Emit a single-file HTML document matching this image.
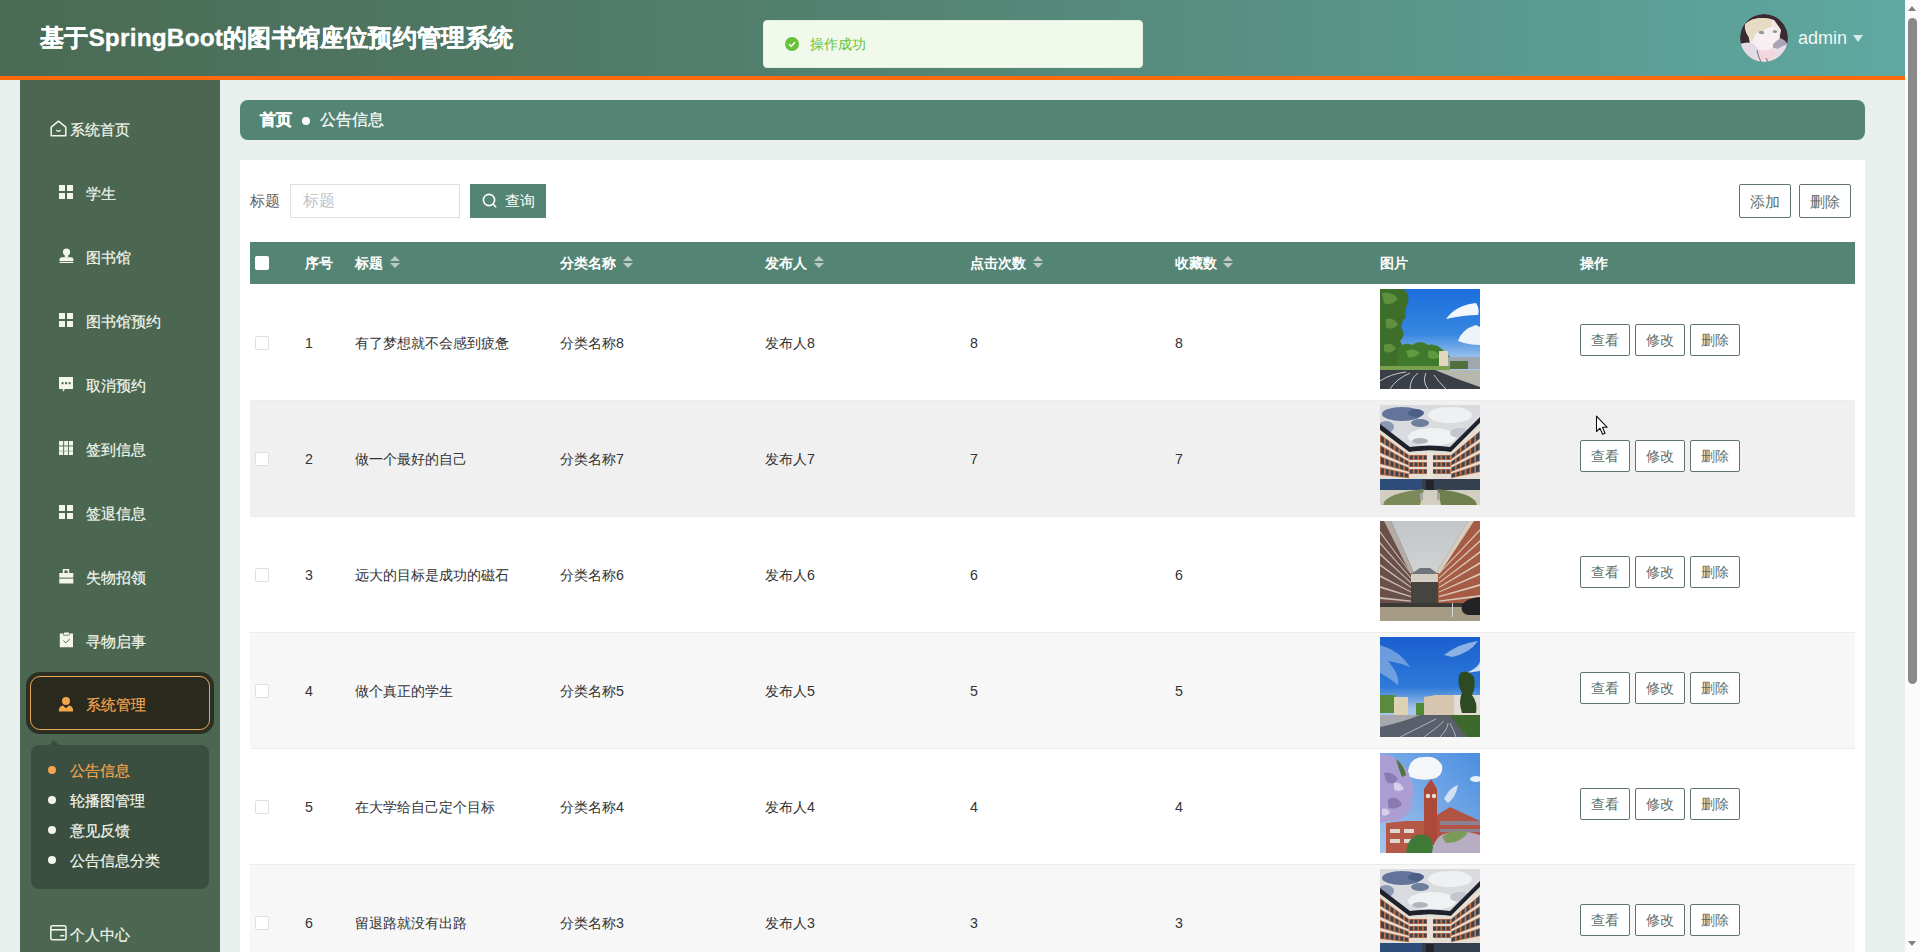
<!DOCTYPE html>
<html><head><meta charset="utf-8">
<style>
*{margin:0;padding:0;box-sizing:border-box}
html,body{width:1920px;height:952px;overflow:hidden}
body{background:#e9efec;font-family:"Liberation Sans",sans-serif;position:relative}
.abs{position:absolute}
#hdr{left:0;top:0;width:1905px;height:80px;background:linear-gradient(90deg,#4a6a53 0%,#548575 50%,#5fa8a1 100%);border-bottom:4px solid #fa6a0a}
#title{left:40px;top:20px;font-size:24.4px;letter-spacing:0.2px;-webkit-text-stroke:0.35px #fff;font-weight:bold;color:#fff;line-height:36px;white-space:nowrap}
#avatar{left:1740px;top:14px;width:48px;height:48px;border-radius:50%;overflow:hidden}
#uname{left:1798px;top:26px;font-size:18px;color:#eef8f6;line-height:24px}
#caret{left:1853px;top:35px;width:0;height:0;border-left:5px solid transparent;border-right:5px solid transparent;border-top:7px solid #d4ece8}
#toast{left:763px;top:20px;width:380px;height:48px;background:#f0f9eb;border:1px solid #e1f3d8;border-radius:4px}
#toast .ic{left:21px;top:16px;width:14px;height:14px;border-radius:50%;background:#67c23a}
#toast .tx{left:46px;top:14px;font-size:14px;color:#67c23a;line-height:18px}
#sb{left:1905px;top:0;width:15px;height:952px;background:#fbfbfb}
#thumb{left:1908px;top:18px;width:9px;height:666px;border-radius:5px;background:#898989}
#side{left:20px;top:80px;width:200px;height:872px;background:#4b6751}
.mi{position:absolute;color:#f2f6ec;font-size:15.3px;line-height:20px;white-space:nowrap;-webkit-text-stroke:0.2px currentColor}
.ico{position:absolute}
#bc{left:240px;top:100px;width:1625px;height:40px;background:#548574;border-radius:8px}
#card{left:240px;top:160px;width:1625px;height:792px;background:#fff}
.lbl{font-size:15.3px;color:#606266;line-height:20px}
.btn{position:absolute;border:1px solid #62746f;background:#fff;color:#5e6e69;font-size:14.3px;line-height:30px;text-align:center;border-radius:2px}
#thead{left:250px;top:242px;width:1605px;height:42px;background:#548574}
.th{position:absolute;top:254px;color:#fff;font-weight:bold;font-size:14.2px;line-height:18px;white-space:nowrap}
.sort{position:absolute;top:256px;width:10px;height:12px}
.row{position:absolute;left:250px;width:1605px;height:116px;box-shadow:inset 0 1px 0 #ececec}
.td{position:absolute;font-size:14.2px;color:#333;line-height:18px;white-space:nowrap}
.cb{position:absolute;left:5px;width:14px;height:14px;border:1px solid #dcdfe6;border-radius:2px;background:#fff}
.img{position:absolute;left:1130px;width:100px;height:100px;overflow:hidden}
.img svg{display:block;filter:blur(0.6px)}
</style></head><body>
<div id="hdr" class="abs"></div>
<div id="title" class="abs">基于SpringBoot的图书馆座位预约管理系统</div>
<div id="avatar" class="abs"><svg width="48" height="48" viewBox="0 0 48 48" style="display:block"><defs><clipPath id="av"><circle cx="24" cy="24" r="24"/></clipPath></defs><g clip-path="url(#av)" style="filter:blur(0.45px)">
<rect width="48" height="48" fill="#f4eaee"/>
<path d="M0 0 H48 V30 L40 26 Q40 12 34 6 Q24 2 12 6 Q6 12 10 30 L0 32 Z" fill="#3b2a32"/>
<path d="M5 10 Q12 3 24 4 Q32 5 36 10 Q40 14 41 18 Q36 12 32 12 Q26 14 22 18 Q16 20 14 28 Q10 26 8 22 Q4 16 5 10Z" fill="#e6dcc4"/>
<path d="M32 7 Q38 10 41 16 L40 22 Q36 14 32 12Z" fill="#f0e6e4"/>
<path d="M13 26 Q14 18 22 17 Q30 13 36 14 Q40 20 39 28 Q36 34 30 37 Q22 38 16 33 Q12 30 13 26Z" fill="#f8eff2"/>
<ellipse cx="21.5" cy="18.5" rx="2.8" ry="1.8" fill="#8c9c98"/><ellipse cx="35" cy="17.5" rx="2.2" ry="1.6" fill="#8c9c98"/>
<path d="M0 30 Q8 27 14 30 Q18 36 22 38 L20 48 H0 Z" fill="#e4dae4"/>
<path d="M20 36 Q28 38 34 33 L36 48 H20 Z" fill="#f2d8de"/>
<path d="M33 30 L40 24 Q46 26 47 30 L42 38 Q38 34 33 34Z" fill="#a9a5b5"/>
<path d="M35 36 Q42 32 48 30 V48 H34Z" fill="#e8dde8"/>
<path d="M17 36 Q18 42 21 48 M26 44 L28 48" stroke="#5a5260" stroke-width="0.8" fill="none"/>
</g></svg></div>
<div id="uname" class="abs">admin</div>
<div id="caret" class="abs"></div>
<div id="toast" class="abs"><div class="ic abs"><svg width="14" height="14" viewBox="0 0 14 14" style="display:block"><path d="M4 7.2 L6.2 9.2 L10 5.2" fill="none" stroke="#fff" stroke-width="1.4"/></svg></div><div class="tx abs">操作成功</div></div>
<div id="sb" class="abs"></div>
<div id="thumb" class="abs"></div>

<div id="side" class="abs"></div>
<!-- sidebar menu -->
<svg class="ico" style="left:50px;top:120px" width="17" height="17" viewBox="0 0 17 17"><path d="M1.2 7.2 L8.5 1.2 L15.8 7.2 V15.8 H1.2 Z" fill="none" stroke="#f2f6ec" stroke-width="1.5" stroke-linejoin="round"/><path d="M6.3 10.3 Q8.5 12.2 10.7 10.3" fill="none" stroke="#f2f6ec" stroke-width="1.3"/></svg>
<div class="mi" style="left:70px;top:120px">系统首页</div>

<svg class="ico" style="left:59px;top:185px" width="14" height="14"><rect x="0" y="0" width="6" height="6" fill="#f2f6ec"/><rect x="8" y="0" width="6" height="6" fill="#f2f6ec"/><rect x="0" y="8" width="6" height="6" fill="#f2f6ec"/><rect x="8" y="8" width="6" height="6" fill="#f2f6ec"/></svg>
<div class="mi" style="left:86px;top:184px">学生</div>

<svg class="ico" style="left:59px;top:248px" width="15" height="15" viewBox="0 0 15 15"><circle cx="7.5" cy="4" r="3.6" fill="#f2f6ec"/><rect x="5.8" y="5" width="3.4" height="4.5" fill="#f2f6ec"/><path d="M0.6 13 V11.3 Q0.6 9.3 3 9.3 H12 Q14.4 9.3 14.4 11.3 V13 Z" fill="#f2f6ec"/><rect x="0.6" y="13.8" width="13.8" height="1.2" fill="#f2f6ec"/></svg>
<div class="mi" style="left:86px;top:248px">图书馆</div>

<svg class="ico" style="left:59px;top:313px" width="14" height="14"><rect x="0" y="0" width="6" height="6" fill="#f2f6ec"/><rect x="8" y="0" width="6" height="6" fill="#f2f6ec"/><rect x="0" y="8" width="6" height="6" fill="#f2f6ec"/><rect x="8" y="8" width="6" height="6" fill="#f2f6ec"/></svg>
<div class="mi" style="left:86px;top:312px">图书馆预约</div>

<svg class="ico" style="left:59px;top:377px" width="15" height="15" viewBox="0 0 15 15"><path d="M0 0 H14 V12 H6 L3.8 15 V12 H0 Z" fill="#f2f6ec"/><rect x="2.6" y="5.2" width="2" height="2" fill="#4b6751"/><rect x="6.1" y="5.2" width="2" height="2" fill="#4b6751"/><rect x="9.6" y="5.2" width="2" height="2" fill="#4b6751"/></svg>
<div class="mi" style="left:86px;top:376px">取消预约</div>

<svg class="ico" style="left:59px;top:441px" width="14" height="14"><path d="M0 0H14V14H0Z" fill="#f2f6ec"/><rect x="4.2" y="0" width="0.9" height="14" fill="#4b6751"/><rect x="9" y="0" width="0.9" height="14" fill="#4b6751"/><rect x="0" y="4.5" width="14" height="0.9" fill="#4b6751"/><rect x="0" y="9.8" width="14" height="0.5" fill="#6d8672"/></svg>
<div class="mi" style="left:86px;top:440px">签到信息</div>

<svg class="ico" style="left:59px;top:505px" width="14" height="14"><rect x="0" y="0" width="6" height="6" fill="#f2f6ec"/><rect x="8" y="0" width="6" height="6" fill="#f2f6ec"/><rect x="0" y="8" width="6" height="6" fill="#f2f6ec"/><rect x="8" y="8" width="6" height="6" fill="#f2f6ec"/></svg>
<div class="mi" style="left:86px;top:504px">签退信息</div>

<svg class="ico" style="left:59px;top:569px" width="15" height="15" viewBox="0 0 15 15"><path d="M3.8 0 H10.2 V4 H8.6 V1.6 H5.4 V4 H3.8 Z" fill="#f2f6ec"/><rect x="0.3" y="4" width="14" height="4.6" fill="#f2f6ec"/><rect x="0.3" y="9.6" width="14" height="4.9" fill="#f2f6ec"/></svg>
<div class="mi" style="left:86px;top:568px">失物招领</div>

<svg class="ico" style="left:59px;top:632px" width="15" height="16" viewBox="0 0 15 16"><path d="M0.8 1.6 H4.3 V3.4 H10.5 V1.6 H14 V15.2 H0.8 Z" fill="#f2f6ec"/><rect x="4.8" y="0.4" width="5.2" height="2.4" rx="0.6" fill="#f2f6ec"/><path d="M4.4 8.6 L6.8 10.8 L10.8 7" fill="none" stroke="#4b6751" stroke-width="1"/></svg>
<div class="mi" style="left:86px;top:632px">寻物启事</div>

<div class="abs" style="left:30px;top:676px;width:180px;height:54px;background:#29291d;border:1.5px solid #e8a657;border-radius:10px;box-shadow:0 0 0 4px #2c3023"></div>
<svg class="ico" style="left:58px;top:696px" width="16" height="16" viewBox="0 0 16 16"><circle cx="8" cy="5" r="4" fill="#f3a54f"/><path d="M0.8 15.6 Q0.8 10.2 5 9.6 L8 12.2 L11 9.6 Q15.2 10.2 15.2 15.6 Z" fill="#f3a54f"/></svg>
<div class="mi" style="left:86px;top:695px;color:#f3a54f">系统管理</div>

<div class="abs" style="left:31px;top:745px;width:178px;height:144px;background:#3a4f40;border-radius:8px"></div>
<div class="abs" style="left:49px;top:740px;width:0;height:0;border-left:5px solid transparent;border-right:5px solid transparent;border-bottom:5px solid #3a4f40"></div>
<div class="abs" style="left:48px;top:766px;width:8px;height:8px;border-radius:50%;background:#f3a54f"></div>
<div class="mi" style="left:70px;top:761px;color:#f3a54f">公告信息</div>
<div class="abs" style="left:48px;top:796px;width:8px;height:8px;border-radius:50%;background:#f2f6ec"></div>
<div class="mi" style="left:70px;top:791px">轮播图管理</div>
<div class="abs" style="left:48px;top:826px;width:8px;height:8px;border-radius:50%;background:#f2f6ec"></div>
<div class="mi" style="left:70px;top:821px">意见反馈</div>
<div class="abs" style="left:48px;top:856px;width:8px;height:8px;border-radius:50%;background:#f2f6ec"></div>
<div class="mi" style="left:70px;top:851px">公告信息分类</div>

<svg class="ico" style="left:50px;top:925px" width="17" height="16" viewBox="0 0 17 16"><rect x="0.8" y="0.8" width="15.2" height="14" rx="1.6" fill="none" stroke="#f2f6ec" stroke-width="1.5"/><rect x="0.8" y="4" width="15.2" height="1.6" fill="#f2f6ec"/><rect x="10.2" y="10" width="4.2" height="1.5" fill="#f2f6ec"/></svg>
<div class="mi" style="left:70px;top:925px">个人中心</div>

<div id="bc" class="abs"></div>
<div id="card" class="abs"></div>
<div id="thead" class="abs"></div>

<div class="abs" style="left:255px;top:256px;width:14px;height:14px;background:#fff;border-radius:2px"></div>
<div class="th" style="left:305px">序号</div>
<div class="th" style="left:355px">标题</div><svg class="sort" style="left:390px" width="10" height="12" viewBox="0 0 10 12"><path d="M5 0 L10 5 H0 Z" fill="#c0c8c4"/><path d="M0 7 H10 L5 12 Z" fill="#c0c8c4"/></svg>
<div class="th" style="left:560px">分类名称</div><svg class="sort" style="left:623px" width="10" height="12" viewBox="0 0 10 12"><path d="M5 0 L10 5 H0 Z" fill="#c0c8c4"/><path d="M0 7 H10 L5 12 Z" fill="#c0c8c4"/></svg>
<div class="th" style="left:765px">发布人</div><svg class="sort" style="left:814px" width="10" height="12" viewBox="0 0 10 12"><path d="M5 0 L10 5 H0 Z" fill="#c0c8c4"/><path d="M0 7 H10 L5 12 Z" fill="#c0c8c4"/></svg>
<div class="th" style="left:970px">点击次数</div><svg class="sort" style="left:1033px" width="10" height="12" viewBox="0 0 10 12"><path d="M5 0 L10 5 H0 Z" fill="#c0c8c4"/><path d="M0 7 H10 L5 12 Z" fill="#c0c8c4"/></svg>
<div class="th" style="left:1175px">收藏数</div><svg class="sort" style="left:1223px" width="10" height="12" viewBox="0 0 10 12"><path d="M5 0 L10 5 H0 Z" fill="#c0c8c4"/><path d="M0 7 H10 L5 12 Z" fill="#c0c8c4"/></svg>
<div class="th" style="left:1380px">图片</div>
<div class="th" style="left:1580px">操作</div>
<div class="row" style="top:284px;background:#fff;box-shadow:none"><div class="cb" style="top:52px"></div><div class="td" style="left:55px;top:50px">1</div><div class="td" style="left:105px;top:50px">有了梦想就不会感到疲惫</div><div class="td" style="left:310px;top:50px">分类名称8</div><div class="td" style="left:515px;top:50px">发布人8</div><div class="td" style="left:720px;top:50px">8</div><div class="td" style="left:925px;top:50px">8</div><div class="img" style="top:5px"><svg width="100" height="100" viewBox="0 0 100 100"><defs><linearGradient id="s1" x1="0" y1="0" x2="0" y2="1"><stop offset="0" stop-color="#1b6ddc"/><stop offset="0.45" stop-color="#3787e0"/><stop offset="0.72" stop-color="#a9c9ee"/></linearGradient></defs>
<g>
<rect width="100" height="100" fill="url(#s1)"/>
<path d="M66 30 Q76 16 96 14 Q100 20 98 26 Q84 26 66 30Z" fill="#f3f6fb"/>
<path d="M78 52 Q82 40 96 36 L100 38 V56 Q88 56 78 52Z" fill="#eef3fa"/>
<path d="M0 0 H24 Q30 6 28 14 Q24 22 26 28 Q20 34 22 40 Q26 46 20 52 Q24 58 22 64 L20 80 H0 Z" fill="#3d6e2a"/>
<path d="M2 4 Q12 2 18 10 Q10 18 4 14Z M6 30 Q14 28 18 36 Q12 42 6 38Z M4 56 Q12 52 16 60 Q10 66 4 62Z" fill="#5f9040"/>
<path d="M18 60 Q24 52 32 56 Q40 50 48 56 Q56 54 64 62 L72 70 V80 H16 Z" fill="#3f7a2c"/>
<path d="M26 62 Q34 58 40 64 Q34 70 28 68Z M48 62 Q56 60 60 68 Q52 72 48 68Z" fill="#5e9a40"/>
<rect x="59" y="62" width="9" height="18" fill="#e2d8bc"/>
<rect x="68" y="68" width="32" height="12" fill="#9ea8ae"/>
<rect x="70" y="72" width="18" height="8" fill="#50703e"/>
<rect x="0" y="77" width="70" height="4" fill="#7aa24e"/>
<path d="M0 81 H100 V100 H0 Z" fill="#3a3e47"/>
<path d="M55 81 H100 V98 Q76 90 55 81 Z" fill="#b8b7ae"/>
<path d="M0 92 Q10 85 26 83 M10 100 Q16 90 30 84 M30 100 Q30 90 38 84 M48 100 Q42 92 46 84 M66 100 Q58 92 54 86" fill="none" stroke="#d6d8da" stroke-width="0.9"/>
</g></svg></div><div class="btn" style="left:1330px;top:40px;width:50px;height:32px">查看</div><div class="btn" style="left:1385px;top:40px;width:50px;height:32px">修改</div><div class="btn" style="left:1440px;top:40px;width:50px;height:32px">删除</div></div>
<div class="row" style="top:400px;background:#f0f0f0"><div class="cb" style="top:52px"></div><div class="td" style="left:55px;top:50px">2</div><div class="td" style="left:105px;top:50px">做一个最好的自己</div><div class="td" style="left:310px;top:50px">分类名称7</div><div class="td" style="left:515px;top:50px">发布人7</div><div class="td" style="left:720px;top:50px">7</div><div class="td" style="left:925px;top:50px">7</div><div class="img" style="top:5px"><svg width="100" height="100" viewBox="0 0 100 100"><g><rect width="100" height="100" fill="#d9dbde"/><ellipse cx="22" cy="9" rx="20" ry="7" fill="#62749a"/><ellipse cx="40" cy="18" rx="9" ry="4" fill="#6d7e9e"/><ellipse cx="6" cy="22" rx="8" ry="6" fill="#8a98b4"/><ellipse cx="36" cy="8" rx="8" ry="4" fill="#4d5f86"/><ellipse cx="70" cy="10" rx="22" ry="8" fill="#eef0f2"/><ellipse cx="52" cy="32" rx="24" ry="9" fill="#f0f1f3"/><ellipse cx="80" cy="28" rx="10" ry="5" fill="#c4c8ce"/><ellipse cx="40" cy="36" rx="8" ry="3" fill="#b0b6c0"/><path d="M0 19 L30 42 Q50 39 70 42 L100 12 V18 L71 47 Q50 44 29 47 L0 25 Z" fill="#1d222c"/><path d="M0 25 L29 47 Q50 44 71 47 L100 18 V75 H0 Z" fill="#e4ded4"/><path d="M0 29.0 L29 50.0 V54.6 L0 37.0 Z" fill="#c17249"/><path d="M0.9 30.4 L4.0 32.7 V38.6 L0.9 36.7 Z" fill="#3a4350"/><path d="M5.7 33.9 L8.8 36.2 V41.5 L5.7 39.7 Z" fill="#3a4350"/><path d="M10.5 37.4 L13.6 39.7 V44.5 L10.5 42.6 Z" fill="#3a4350"/><path d="M15.4 40.9 L18.5 43.2 V47.4 L15.4 45.5 Z" fill="#3a4350"/><path d="M20.2 44.4 L23.3 46.7 V50.3 L20.2 48.5 Z" fill="#3a4350"/><path d="M25.0 47.9 L28.1 50.2 V53.3 L25.0 51.4 Z" fill="#3a4350"/><path d="M0 40.0 L29 56.2 V60.8 L0 48.0 Z" fill="#c17249"/><path d="M0.9 41.3 L4.0 43.0 V48.9 L0.9 47.6 Z" fill="#3a4350"/><path d="M5.7 44.0 L8.8 45.7 V51.1 L5.7 49.7 Z" fill="#3a4350"/><path d="M10.5 46.7 L13.6 48.4 V53.2 L10.5 51.9 Z" fill="#3a4350"/><path d="M15.4 49.4 L18.5 51.1 V55.3 L15.4 54.0 Z" fill="#3a4350"/><path d="M20.2 52.1 L23.3 53.8 V57.5 L20.2 56.1 Z" fill="#3a4350"/><path d="M25.0 54.8 L28.1 56.5 V59.6 L25.0 58.3 Z" fill="#3a4350"/><path d="M0 51.0 L29 62.4 V67.0 L0 59.0 Z" fill="#c17249"/><path d="M0.9 52.1 L4.0 53.4 V59.3 L0.9 58.4 Z" fill="#3a4350"/><path d="M5.7 54.0 L8.8 55.3 V60.6 L5.7 59.8 Z" fill="#3a4350"/><path d="M10.5 55.9 L13.6 57.2 V62.0 L10.5 61.1 Z" fill="#3a4350"/><path d="M15.4 57.8 L18.5 59.1 V63.3 L15.4 62.4 Z" fill="#3a4350"/><path d="M20.2 59.7 L23.3 61.0 V64.6 L20.2 63.8 Z" fill="#3a4350"/><path d="M25.0 61.6 L28.1 62.9 V66.0 L25.0 65.1 Z" fill="#3a4350"/><path d="M0 62.0 L29 68.6 V73.2 L0 70.0 Z" fill="#c17249"/><path d="M0.9 63.0 L4.0 63.7 V69.6 L0.9 69.3 Z" fill="#3a4350"/><path d="M5.7 64.1 L8.8 64.8 V70.2 L5.7 69.8 Z" fill="#3a4350"/><path d="M10.5 65.2 L13.6 65.9 V70.7 L10.5 70.4 Z" fill="#3a4350"/><path d="M15.4 66.3 L18.5 67.0 V71.2 L15.4 70.9 Z" fill="#3a4350"/><path d="M20.2 67.4 L23.3 68.1 V71.8 L20.2 71.4 Z" fill="#3a4350"/><path d="M25.0 68.5 L28.1 69.2 V72.3 L25.0 72.0 Z" fill="#3a4350"/><path d="M100 26.0 L71 50.0 V54.6 L100 34.0 Z" fill="#c17249"/><path d="M99.1 27.5 L96.0 30.1 V36.0 L99.1 33.8 Z" fill="#3a4350"/><path d="M94.3 31.5 L91.2 34.1 V39.4 L94.3 37.3 Z" fill="#3a4350"/><path d="M89.5 35.5 L86.4 38.1 V42.9 L89.5 40.7 Z" fill="#3a4350"/><path d="M84.6 39.5 L81.5 42.1 V46.3 L84.6 44.1 Z" fill="#3a4350"/><path d="M79.8 43.5 L76.7 46.1 V49.7 L79.8 47.6 Z" fill="#3a4350"/><path d="M75.0 47.5 L71.9 50.1 V53.2 L75.0 51.0 Z" fill="#3a4350"/><path d="M100 37.0 L71 56.2 V60.8 L100 45.0 Z" fill="#c17249"/><path d="M99.1 38.4 L96.0 40.4 V46.4 L99.1 44.7 Z" fill="#3a4350"/><path d="M94.3 41.6 L91.2 43.6 V49.0 L94.3 47.3 Z" fill="#3a4350"/><path d="M89.5 44.8 L86.4 46.8 V51.6 L89.5 49.9 Z" fill="#3a4350"/><path d="M84.6 48.0 L81.5 50.0 V54.3 L84.6 52.6 Z" fill="#3a4350"/><path d="M79.8 51.2 L76.7 53.2 V56.9 L79.8 55.2 Z" fill="#3a4350"/><path d="M75.0 54.4 L71.9 56.4 V59.5 L75.0 57.8 Z" fill="#3a4350"/><path d="M100 48.0 L71 62.4 V67.0 L100 56.0 Z" fill="#c17249"/><path d="M99.1 49.2 L96.0 50.8 V56.7 L99.1 55.5 Z" fill="#3a4350"/><path d="M94.3 51.6 L91.2 53.2 V58.5 L94.3 57.4 Z" fill="#3a4350"/><path d="M89.5 54.0 L86.4 55.6 V60.4 L89.5 59.2 Z" fill="#3a4350"/><path d="M84.6 56.4 L81.5 58.0 V62.2 L84.6 61.0 Z" fill="#3a4350"/><path d="M79.8 58.8 L76.7 60.4 V64.0 L79.8 62.9 Z" fill="#3a4350"/><path d="M75.0 61.2 L71.9 62.8 V65.9 L75.0 64.7 Z" fill="#3a4350"/><path d="M100 59.0 L71 68.6 V73.2 L100 67.0 Z" fill="#c17249"/><path d="M99.1 60.1 L96.0 61.1 V67.0 L99.1 66.4 Z" fill="#3a4350"/><path d="M94.3 61.7 L91.2 62.7 V68.1 L94.3 67.4 Z" fill="#3a4350"/><path d="M89.5 63.3 L86.4 64.3 V69.1 L89.5 68.5 Z" fill="#3a4350"/><path d="M84.6 64.9 L81.5 65.9 V70.1 L84.6 69.5 Z" fill="#3a4350"/><path d="M79.8 66.5 L76.7 67.5 V71.2 L79.8 70.5 Z" fill="#3a4350"/><path d="M75.0 68.1 L71.9 69.1 V72.2 L75.0 71.6 Z" fill="#3a4350"/><rect x="29" y="50" width="42" height="5" fill="#c17249"/><rect x="30.0" y="50.7" width="2.8" height="3.6" fill="#3a4350"/><rect x="34.6" y="50.7" width="2.8" height="3.6" fill="#3a4350"/><rect x="39.2" y="50.7" width="2.8" height="3.6" fill="#3a4350"/><rect x="43.8" y="50.7" width="2.8" height="3.6" fill="#3a4350"/><rect x="48.4" y="50.7" width="2.8" height="3.6" fill="#3a4350"/><rect x="53.0" y="50.7" width="2.8" height="3.6" fill="#3a4350"/><rect x="57.6" y="50.7" width="2.8" height="3.6" fill="#3a4350"/><rect x="62.2" y="50.7" width="2.8" height="3.6" fill="#3a4350"/><rect x="66.8" y="50.7" width="2.8" height="3.6" fill="#3a4350"/><rect x="29" y="57" width="42" height="5" fill="#c17249"/><rect x="30.0" y="57.7" width="2.8" height="3.6" fill="#3a4350"/><rect x="34.6" y="57.7" width="2.8" height="3.6" fill="#3a4350"/><rect x="39.2" y="57.7" width="2.8" height="3.6" fill="#3a4350"/><rect x="43.8" y="57.7" width="2.8" height="3.6" fill="#3a4350"/><rect x="48.4" y="57.7" width="2.8" height="3.6" fill="#3a4350"/><rect x="53.0" y="57.7" width="2.8" height="3.6" fill="#3a4350"/><rect x="57.6" y="57.7" width="2.8" height="3.6" fill="#3a4350"/><rect x="62.2" y="57.7" width="2.8" height="3.6" fill="#3a4350"/><rect x="66.8" y="57.7" width="2.8" height="3.6" fill="#3a4350"/><rect x="29" y="64" width="42" height="5" fill="#c17249"/><rect x="30.0" y="64.7" width="2.8" height="3.6" fill="#3a4350"/><rect x="34.6" y="64.7" width="2.8" height="3.6" fill="#3a4350"/><rect x="39.2" y="64.7" width="2.8" height="3.6" fill="#3a4350"/><rect x="43.8" y="64.7" width="2.8" height="3.6" fill="#3a4350"/><rect x="48.4" y="64.7" width="2.8" height="3.6" fill="#3a4350"/><rect x="53.0" y="64.7" width="2.8" height="3.6" fill="#3a4350"/><rect x="57.6" y="64.7" width="2.8" height="3.6" fill="#3a4350"/><rect x="62.2" y="64.7" width="2.8" height="3.6" fill="#3a4350"/><rect x="66.8" y="64.7" width="2.8" height="3.6" fill="#3a4350"/><rect x="47" y="46" width="6" height="28" fill="#e8e4dc"/><rect x="0" y="74" width="100" height="12" fill="#34404f"/><rect x="0" y="74" width="42" height="11" fill="#2d4c7a"/><rect x="46" y="75" width="8" height="11" fill="#22262c"/><rect x="0" y="85" width="100" height="15" fill="#d2cec2"/><path d="M3 100 Q5 88 44 84 L40 100 Z" fill="#7c8a5a"/><path d="M97 100 Q95 88 57 84 L61 100 Z" fill="#6f804c"/><rect x="40" y="88" width="3" height="7" fill="#a8a8a4"/><rect x="57" y="88" width="3" height="7" fill="#a8a8a4"/></g></svg></div><div class="btn" style="left:1330px;top:40px;width:50px;height:32px">查看</div><div class="btn" style="left:1385px;top:40px;width:50px;height:32px">修改</div><div class="btn" style="left:1440px;top:40px;width:50px;height:32px">删除</div></div>
<div class="row" style="top:516px;background:#fff"><div class="cb" style="top:52px"></div><div class="td" style="left:55px;top:50px">3</div><div class="td" style="left:105px;top:50px">远大的目标是成功的磁石</div><div class="td" style="left:310px;top:50px">分类名称6</div><div class="td" style="left:515px;top:50px">发布人6</div><div class="td" style="left:720px;top:50px">6</div><div class="td" style="left:925px;top:50px">6</div><div class="img" style="top:5px"><svg width="100" height="100" viewBox="0 0 100 100"><defs><linearGradient id="s3" x1="0" y1="0" x2="0" y2="1"><stop offset="0" stop-color="#c2c6ca"/><stop offset="1" stop-color="#dededa"/></linearGradient></defs><g><rect width="100" height="100" fill="url(#s3)"/><path d="M0 0 H11 L34 52 V84 H0 Z" fill="#6a5049"/><path d="M0 0 H11 L34 52 L30 52 L4 0Z" fill="#b4aca4"/><path d="M0 10.0 L31 52.0 V53.2 L0 12.0 Z" fill="#c8beb4"/><path d="M0 21.0 L31 56.6 V57.8 L0 23.0 Z" fill="#c8beb4"/><path d="M0 32.0 L31 61.2 V62.4 L0 34.0 Z" fill="#c8beb4"/><path d="M0 43.0 L31 65.8 V67.0 L0 45.0 Z" fill="#c8beb4"/><path d="M0 54.0 L31 70.4 V71.6 L0 56.0 Z" fill="#c8beb4"/><path d="M0 65.0 L31 75.0 V76.2 L0 67.0 Z" fill="#c8beb4"/><path d="M0 76.0 L31 79.6 V80.8 L0 78.0 Z" fill="#c8beb4"/><path d="M100 0 H88 L56 52 V84 H100 Z" fill="#a65c44"/><path d="M88 0 L56 52 L60 52 L94 0Z" fill="#d4cec2"/><path d="M100 8.0 L59 52.0 V53.2 L100 10.0 Z" fill="#d8c8b8"/><path d="M100 19.0 L59 56.6 V57.8 L100 21.0 Z" fill="#d8c8b8"/><path d="M100 30.0 L59 61.2 V62.4 L100 32.0 Z" fill="#d8c8b8"/><path d="M100 41.0 L59 65.8 V67.0 L100 43.0 Z" fill="#d8c8b8"/><path d="M100 52.0 L59 70.4 V71.6 L100 54.0 Z" fill="#d8c8b8"/><path d="M100 63.0 L59 75.0 V76.2 L100 65.0 Z" fill="#d8c8b8"/><path d="M100 74.0 L59 79.6 V80.8 L100 76.0 Z" fill="#d8c8b8"/><path d="M31 53 L40 47 H50 L58 53 Z" fill="#6e767c"/><rect x="31" y="53" width="27" height="8" fill="#d4cec2"/><rect x="31" y="61" width="27" height="23" fill="#46443f"/><rect x="0" y="82" width="100" height="4" fill="#3a3936"/><rect x="0" y="86" width="100" height="14" fill="#a69b84"/><path d="M82 84 Q86 77 100 76 V94 H88 Q80 92 82 84Z" fill="#232325"/><rect x="72" y="82" width="1" height="14" fill="#d8d8d8"/></g></svg></div><div class="btn" style="left:1330px;top:40px;width:50px;height:32px">查看</div><div class="btn" style="left:1385px;top:40px;width:50px;height:32px">修改</div><div class="btn" style="left:1440px;top:40px;width:50px;height:32px">删除</div></div>
<div class="row" style="top:632px;background:#f7f7f7"><div class="cb" style="top:52px"></div><div class="td" style="left:55px;top:50px">4</div><div class="td" style="left:105px;top:50px">做个真正的学生</div><div class="td" style="left:310px;top:50px">分类名称5</div><div class="td" style="left:515px;top:50px">发布人5</div><div class="td" style="left:720px;top:50px">5</div><div class="td" style="left:925px;top:50px">5</div><div class="img" style="top:5px"><svg width="100" height="100" viewBox="0 0 100 100"><defs><linearGradient id="s4" x1="0" y1="0" x2="0" y2="1"><stop offset="0" stop-color="#1a5fcf"/><stop offset="0.5" stop-color="#2e7ad8"/><stop offset="0.72" stop-color="#a8c4e8"/></linearGradient></defs>
<g>
<rect width="100" height="100" fill="url(#s4)"/>
<path d="M0 8 Q20 14 30 30 Q20 26 8 24 Q20 38 18 48 Q8 40 0 36 Z" fill="#8fb2e2" opacity="0.7"/>
<path d="M64 18 Q80 6 98 4 Q90 16 72 20Z" fill="#a8c4ea" opacity="0.8"/>
<path d="M86 36 Q100 30 100 24 V34 Z" fill="#d0def2"/>
<rect x="0" y="58" width="15" height="18" fill="#5c8a3c"/>
<rect x="14" y="60" width="14" height="18" fill="#ddd3b4"/>
<rect x="36" y="66" width="14" height="12" fill="#4e8a36"/>
<path d="M44 60 L56 58 H76 V78 H44 Z" fill="#d6c6b0"/>
<rect x="74" y="58" width="26" height="20" fill="#e2dcd4"/>
<path d="M80 36 Q88 32 94 40 Q96 50 92 58 Q98 66 96 76 H82 Q78 64 82 56 Q76 46 80 36Z" fill="#2d4a22"/>
<path d="M0 78 H72 L86 100 H0Z" fill="#5a5f6c"/>
<path d="M0 78 H40 Q20 86 0 90Z" fill="#a6a8ae"/>
<path d="M70 78 H100 V100 H86 Z" fill="#3d6a2c"/>
<path d="M20 100 Q44 88 56 82 M44 100 Q58 90 64 84 M60 100 Q68 92 68 86 M76 100 Q74 94 70 86" fill="none" stroke="#c8ccd4" stroke-width="0.8"/>
</g></svg></div><div class="btn" style="left:1330px;top:40px;width:50px;height:32px">查看</div><div class="btn" style="left:1385px;top:40px;width:50px;height:32px">修改</div><div class="btn" style="left:1440px;top:40px;width:50px;height:32px">删除</div></div>
<div class="row" style="top:748px;background:#fff"><div class="cb" style="top:52px"></div><div class="td" style="left:55px;top:50px">5</div><div class="td" style="left:105px;top:50px">在大学给自己定个目标</div><div class="td" style="left:310px;top:50px">分类名称4</div><div class="td" style="left:515px;top:50px">发布人4</div><div class="td" style="left:720px;top:50px">4</div><div class="td" style="left:925px;top:50px">4</div><div class="img" style="top:5px"><svg width="100" height="100" viewBox="0 0 100 100"><defs><linearGradient id="s5" x1="1" y1="0" x2="0" y2="1"><stop offset="0" stop-color="#4a8ee0"/><stop offset="1" stop-color="#a6c6ec"/></linearGradient></defs>
<g>
<rect width="100" height="100" fill="url(#s5)"/>
<path d="M28 18 Q30 4 44 4 Q56 2 62 12 Q64 24 52 26 Q40 28 30 24Z" fill="#f4f6fa"/>
<path d="M64 46 Q70 34 78 32 Q76 44 68 50Z" fill="#d2e2f4"/>
<ellipse cx="96" cy="26" rx="6" ry="3" fill="#e8f0fa"/>
<path d="M0 2 Q10 0 18 8 Q28 14 30 26 Q36 34 32 46 Q34 56 26 62 Q18 70 8 68 L0 70Z" fill="#ac9ed2"/>
<path d="M4 20 Q12 18 18 26 Q12 34 6 28Z M8 46 Q18 42 22 52 Q14 58 8 54Z" fill="#8a7ab4"/>
<path d="M14 30 Q20 28 24 36 Q18 40 14 36Z M2 56 Q8 54 10 60 Q6 64 2 62Z" fill="#d8d0ec"/>
<path d="M16 6 Q24 12 26 22 L22 24 Q18 14 16 6Z" fill="#4e7444"/>
<path d="M6 70 L26 68 H44 V100 H6Z" fill="#b55846"/>
<path d="M10 76 H20 V80 H10Z M24 76 H34 V80 H24Z M10 86 H20 V90 H10Z M24 86 H34 V90 H24Z" fill="#e2d6d0"/>
<path d="M44 36 L51 26 L57 36 V92 H44 Z" fill="#ac4a3a"/>
<circle cx="48" cy="43" r="2.2" fill="#e8e0d8"/><circle cx="54" cy="43" r="2.2" fill="#e8e0d8"/>
<path d="M57 62 L70 54 L100 68 V86 H57Z" fill="#b25444"/>
<path d="M60 68 H100 V72 H60Z M60 76 H100 V79 H60Z" fill="#7c94b4" opacity="0.7"/>
<path d="M26 100 Q28 84 38 82 Q48 80 52 88 L54 100Z" fill="#3e7a36"/>
<path d="M52 100 Q54 82 68 80 Q84 76 100 82 V100Z" fill="#b8aec4"/>
<path d="M62 84 Q74 74 88 80 Q80 90 66 90Z" fill="#7a9c58"/>
</g></svg></div><div class="btn" style="left:1330px;top:40px;width:50px;height:32px">查看</div><div class="btn" style="left:1385px;top:40px;width:50px;height:32px">修改</div><div class="btn" style="left:1440px;top:40px;width:50px;height:32px">删除</div></div>
<div class="row" style="top:864px;background:#f7f7f7"><div class="cb" style="top:52px"></div><div class="td" style="left:55px;top:50px">6</div><div class="td" style="left:105px;top:50px">留退路就没有出路</div><div class="td" style="left:310px;top:50px">分类名称3</div><div class="td" style="left:515px;top:50px">发布人3</div><div class="td" style="left:720px;top:50px">3</div><div class="td" style="left:925px;top:50px">3</div><div class="img" style="top:5px"><svg width="100" height="100" viewBox="0 0 100 100"><g><rect width="100" height="100" fill="#d9dbde"/><ellipse cx="22" cy="9" rx="20" ry="7" fill="#62749a"/><ellipse cx="40" cy="18" rx="9" ry="4" fill="#6d7e9e"/><ellipse cx="6" cy="22" rx="8" ry="6" fill="#8a98b4"/><ellipse cx="36" cy="8" rx="8" ry="4" fill="#4d5f86"/><ellipse cx="70" cy="10" rx="22" ry="8" fill="#eef0f2"/><ellipse cx="52" cy="32" rx="24" ry="9" fill="#f0f1f3"/><ellipse cx="80" cy="28" rx="10" ry="5" fill="#c4c8ce"/><ellipse cx="40" cy="36" rx="8" ry="3" fill="#b0b6c0"/><path d="M0 19 L30 42 Q50 39 70 42 L100 12 V18 L71 47 Q50 44 29 47 L0 25 Z" fill="#1d222c"/><path d="M0 25 L29 47 Q50 44 71 47 L100 18 V75 H0 Z" fill="#e4ded4"/><path d="M0 29.0 L29 50.0 V54.6 L0 37.0 Z" fill="#c17249"/><path d="M0.9 30.4 L4.0 32.7 V38.6 L0.9 36.7 Z" fill="#3a4350"/><path d="M5.7 33.9 L8.8 36.2 V41.5 L5.7 39.7 Z" fill="#3a4350"/><path d="M10.5 37.4 L13.6 39.7 V44.5 L10.5 42.6 Z" fill="#3a4350"/><path d="M15.4 40.9 L18.5 43.2 V47.4 L15.4 45.5 Z" fill="#3a4350"/><path d="M20.2 44.4 L23.3 46.7 V50.3 L20.2 48.5 Z" fill="#3a4350"/><path d="M25.0 47.9 L28.1 50.2 V53.3 L25.0 51.4 Z" fill="#3a4350"/><path d="M0 40.0 L29 56.2 V60.8 L0 48.0 Z" fill="#c17249"/><path d="M0.9 41.3 L4.0 43.0 V48.9 L0.9 47.6 Z" fill="#3a4350"/><path d="M5.7 44.0 L8.8 45.7 V51.1 L5.7 49.7 Z" fill="#3a4350"/><path d="M10.5 46.7 L13.6 48.4 V53.2 L10.5 51.9 Z" fill="#3a4350"/><path d="M15.4 49.4 L18.5 51.1 V55.3 L15.4 54.0 Z" fill="#3a4350"/><path d="M20.2 52.1 L23.3 53.8 V57.5 L20.2 56.1 Z" fill="#3a4350"/><path d="M25.0 54.8 L28.1 56.5 V59.6 L25.0 58.3 Z" fill="#3a4350"/><path d="M0 51.0 L29 62.4 V67.0 L0 59.0 Z" fill="#c17249"/><path d="M0.9 52.1 L4.0 53.4 V59.3 L0.9 58.4 Z" fill="#3a4350"/><path d="M5.7 54.0 L8.8 55.3 V60.6 L5.7 59.8 Z" fill="#3a4350"/><path d="M10.5 55.9 L13.6 57.2 V62.0 L10.5 61.1 Z" fill="#3a4350"/><path d="M15.4 57.8 L18.5 59.1 V63.3 L15.4 62.4 Z" fill="#3a4350"/><path d="M20.2 59.7 L23.3 61.0 V64.6 L20.2 63.8 Z" fill="#3a4350"/><path d="M25.0 61.6 L28.1 62.9 V66.0 L25.0 65.1 Z" fill="#3a4350"/><path d="M0 62.0 L29 68.6 V73.2 L0 70.0 Z" fill="#c17249"/><path d="M0.9 63.0 L4.0 63.7 V69.6 L0.9 69.3 Z" fill="#3a4350"/><path d="M5.7 64.1 L8.8 64.8 V70.2 L5.7 69.8 Z" fill="#3a4350"/><path d="M10.5 65.2 L13.6 65.9 V70.7 L10.5 70.4 Z" fill="#3a4350"/><path d="M15.4 66.3 L18.5 67.0 V71.2 L15.4 70.9 Z" fill="#3a4350"/><path d="M20.2 67.4 L23.3 68.1 V71.8 L20.2 71.4 Z" fill="#3a4350"/><path d="M25.0 68.5 L28.1 69.2 V72.3 L25.0 72.0 Z" fill="#3a4350"/><path d="M100 26.0 L71 50.0 V54.6 L100 34.0 Z" fill="#c17249"/><path d="M99.1 27.5 L96.0 30.1 V36.0 L99.1 33.8 Z" fill="#3a4350"/><path d="M94.3 31.5 L91.2 34.1 V39.4 L94.3 37.3 Z" fill="#3a4350"/><path d="M89.5 35.5 L86.4 38.1 V42.9 L89.5 40.7 Z" fill="#3a4350"/><path d="M84.6 39.5 L81.5 42.1 V46.3 L84.6 44.1 Z" fill="#3a4350"/><path d="M79.8 43.5 L76.7 46.1 V49.7 L79.8 47.6 Z" fill="#3a4350"/><path d="M75.0 47.5 L71.9 50.1 V53.2 L75.0 51.0 Z" fill="#3a4350"/><path d="M100 37.0 L71 56.2 V60.8 L100 45.0 Z" fill="#c17249"/><path d="M99.1 38.4 L96.0 40.4 V46.4 L99.1 44.7 Z" fill="#3a4350"/><path d="M94.3 41.6 L91.2 43.6 V49.0 L94.3 47.3 Z" fill="#3a4350"/><path d="M89.5 44.8 L86.4 46.8 V51.6 L89.5 49.9 Z" fill="#3a4350"/><path d="M84.6 48.0 L81.5 50.0 V54.3 L84.6 52.6 Z" fill="#3a4350"/><path d="M79.8 51.2 L76.7 53.2 V56.9 L79.8 55.2 Z" fill="#3a4350"/><path d="M75.0 54.4 L71.9 56.4 V59.5 L75.0 57.8 Z" fill="#3a4350"/><path d="M100 48.0 L71 62.4 V67.0 L100 56.0 Z" fill="#c17249"/><path d="M99.1 49.2 L96.0 50.8 V56.7 L99.1 55.5 Z" fill="#3a4350"/><path d="M94.3 51.6 L91.2 53.2 V58.5 L94.3 57.4 Z" fill="#3a4350"/><path d="M89.5 54.0 L86.4 55.6 V60.4 L89.5 59.2 Z" fill="#3a4350"/><path d="M84.6 56.4 L81.5 58.0 V62.2 L84.6 61.0 Z" fill="#3a4350"/><path d="M79.8 58.8 L76.7 60.4 V64.0 L79.8 62.9 Z" fill="#3a4350"/><path d="M75.0 61.2 L71.9 62.8 V65.9 L75.0 64.7 Z" fill="#3a4350"/><path d="M100 59.0 L71 68.6 V73.2 L100 67.0 Z" fill="#c17249"/><path d="M99.1 60.1 L96.0 61.1 V67.0 L99.1 66.4 Z" fill="#3a4350"/><path d="M94.3 61.7 L91.2 62.7 V68.1 L94.3 67.4 Z" fill="#3a4350"/><path d="M89.5 63.3 L86.4 64.3 V69.1 L89.5 68.5 Z" fill="#3a4350"/><path d="M84.6 64.9 L81.5 65.9 V70.1 L84.6 69.5 Z" fill="#3a4350"/><path d="M79.8 66.5 L76.7 67.5 V71.2 L79.8 70.5 Z" fill="#3a4350"/><path d="M75.0 68.1 L71.9 69.1 V72.2 L75.0 71.6 Z" fill="#3a4350"/><rect x="29" y="50" width="42" height="5" fill="#c17249"/><rect x="30.0" y="50.7" width="2.8" height="3.6" fill="#3a4350"/><rect x="34.6" y="50.7" width="2.8" height="3.6" fill="#3a4350"/><rect x="39.2" y="50.7" width="2.8" height="3.6" fill="#3a4350"/><rect x="43.8" y="50.7" width="2.8" height="3.6" fill="#3a4350"/><rect x="48.4" y="50.7" width="2.8" height="3.6" fill="#3a4350"/><rect x="53.0" y="50.7" width="2.8" height="3.6" fill="#3a4350"/><rect x="57.6" y="50.7" width="2.8" height="3.6" fill="#3a4350"/><rect x="62.2" y="50.7" width="2.8" height="3.6" fill="#3a4350"/><rect x="66.8" y="50.7" width="2.8" height="3.6" fill="#3a4350"/><rect x="29" y="57" width="42" height="5" fill="#c17249"/><rect x="30.0" y="57.7" width="2.8" height="3.6" fill="#3a4350"/><rect x="34.6" y="57.7" width="2.8" height="3.6" fill="#3a4350"/><rect x="39.2" y="57.7" width="2.8" height="3.6" fill="#3a4350"/><rect x="43.8" y="57.7" width="2.8" height="3.6" fill="#3a4350"/><rect x="48.4" y="57.7" width="2.8" height="3.6" fill="#3a4350"/><rect x="53.0" y="57.7" width="2.8" height="3.6" fill="#3a4350"/><rect x="57.6" y="57.7" width="2.8" height="3.6" fill="#3a4350"/><rect x="62.2" y="57.7" width="2.8" height="3.6" fill="#3a4350"/><rect x="66.8" y="57.7" width="2.8" height="3.6" fill="#3a4350"/><rect x="29" y="64" width="42" height="5" fill="#c17249"/><rect x="30.0" y="64.7" width="2.8" height="3.6" fill="#3a4350"/><rect x="34.6" y="64.7" width="2.8" height="3.6" fill="#3a4350"/><rect x="39.2" y="64.7" width="2.8" height="3.6" fill="#3a4350"/><rect x="43.8" y="64.7" width="2.8" height="3.6" fill="#3a4350"/><rect x="48.4" y="64.7" width="2.8" height="3.6" fill="#3a4350"/><rect x="53.0" y="64.7" width="2.8" height="3.6" fill="#3a4350"/><rect x="57.6" y="64.7" width="2.8" height="3.6" fill="#3a4350"/><rect x="62.2" y="64.7" width="2.8" height="3.6" fill="#3a4350"/><rect x="66.8" y="64.7" width="2.8" height="3.6" fill="#3a4350"/><rect x="47" y="46" width="6" height="28" fill="#e8e4dc"/><rect x="0" y="74" width="100" height="12" fill="#34404f"/><rect x="0" y="74" width="42" height="11" fill="#2d4c7a"/><rect x="46" y="75" width="8" height="11" fill="#22262c"/><rect x="0" y="85" width="100" height="15" fill="#d2cec2"/><path d="M3 100 Q5 88 44 84 L40 100 Z" fill="#7c8a5a"/><path d="M97 100 Q95 88 57 84 L61 100 Z" fill="#6f804c"/><rect x="40" y="88" width="3" height="7" fill="#a8a8a4"/><rect x="57" y="88" width="3" height="7" fill="#a8a8a4"/></g></svg></div><div class="btn" style="left:1330px;top:40px;width:50px;height:32px">查看</div><div class="btn" style="left:1385px;top:40px;width:50px;height:32px">修改</div><div class="btn" style="left:1440px;top:40px;width:50px;height:32px">删除</div></div>
<!-- breadcrumb -->
<div class="abs" style="left:260px;top:109px;font-size:16.3px;font-weight:bold;color:#fff;line-height:20px;-webkit-text-stroke:0.4px #fff">首页</div>
<div class="abs" style="left:302px;top:117px;width:8px;height:8px;border-radius:50%;background:#fff"></div>
<div class="abs" style="left:320px;top:109px;font-size:16.3px;color:#fff;line-height:20px;-webkit-text-stroke:0.2px #fff">公告信息</div>

<!-- search -->
<div class="abs lbl" style="left:250px;top:191px">标题</div>
<div class="abs" style="left:290px;top:184px;width:170px;height:34px;border:1px solid #dcdfe6;background:#fff"></div>
<div class="abs" style="left:303px;top:191px;font-size:15.8px;color:#c0c4cc;line-height:20px">标题</div>
<div class="abs" style="left:470px;top:184px;width:76px;height:34px;background:#548574"></div>
<svg class="ico" style="left:482px;top:193px" width="16" height="16" viewBox="0 0 16 16"><circle cx="7" cy="7" r="5.6" fill="none" stroke="#fff" stroke-width="1.6"/><path d="M11 11 L14.2 14.2" stroke="#fff" stroke-width="1.6"/></svg>
<div class="abs" style="left:505px;top:191px;font-size:15.3px;color:#fff;line-height:20px">查询</div>

<div class="btn" style="left:1739px;top:184px;width:52px;height:34px;line-height:32px;padding-top:1px;font-size:15.3px">添加</div>
<div class="btn" style="left:1799px;top:184px;width:52px;height:34px;line-height:32px;padding-top:1px;font-size:15.3px">删除</div>


<div class="abs" style="left:1908px;top:6px;width:0;height:0;border-left:4.5px solid transparent;border-right:4.5px solid transparent;border-bottom:5px solid #7f7f7f"></div>
<div class="abs" style="left:1908px;top:941px;width:0;height:0;border-left:4.5px solid transparent;border-right:4.5px solid transparent;border-top:5px solid #7f7f7f"></div>
<svg class="abs" style="left:1595px;top:415px" width="14" height="21" viewBox="0 0 14 21"><path d="M1.5 1.2 V16.5 L5 13.2 L7.6 19.2 L10 18.2 L7.5 12.3 H12.2 Z" fill="#fff" stroke="#111" stroke-width="1.1" stroke-linejoin="round"/></svg>
</body></html>
